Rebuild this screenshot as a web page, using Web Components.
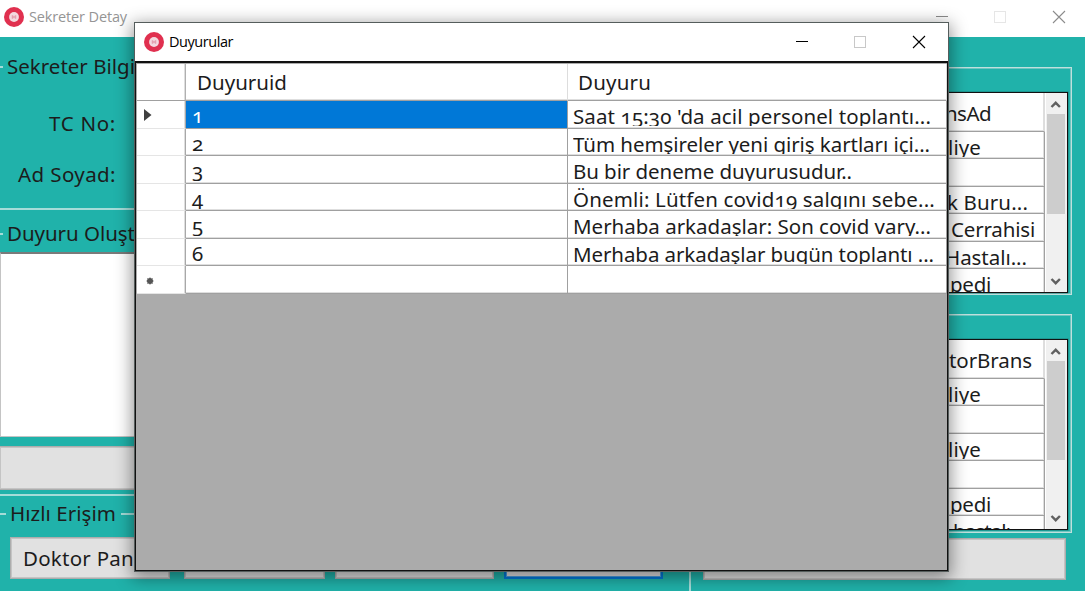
<!DOCTYPE html>
<html lang="tr"><head><meta charset="utf-8"><title>Sekreter Detay</title>
<style>html,body{margin:0;height:591px;overflow:hidden}body{width:1085px;position:relative;font:20.5px "Noto Sans","Open Sans",sans-serif;font-variant-numeric:oldstyle-nums;color:#1c1c1c}</style></head>
<body>
<secretary-page></secretary-page>
<script>
// Text run whose tracking is tuned to a given advance width.
class FitText extends HTMLElement{
  connectedCallback(){
    this.attachShadow({mode:'open'}).innerHTML='<style>:host{display:inline-block;white-space:pre;flex:none}span{display:inline-block}</style><span><slot></slot></span>';
    const w=+this.getAttribute('w');
    if(w){const s=this.shadowRoot.querySelector('span'),n=this.textContent.length;
      s.style.letterSpacing=((w-s.getBoundingClientRect().width)/n)+'px';}
  }
}
class AppIcon extends HTMLElement{
  connectedCallback(){this.attachShadow({mode:'open'}).innerHTML=`<style>:host{display:block;width:20px;height:20px;flex:none}svg{display:block}</style>
  <svg width="20" height="20" viewBox="0 0 20 20"><circle cx="10" cy="10" r="10" fill="#e0304f"/><circle cx="10" cy="10" r="4.9" fill="#f3d9df"/><path d="M8.500 8.200v3.600M11.500 8.200v3.600M8.500 10h3" stroke="#e3a0ae" stroke-width="1.500" fill="none"/></svg>`;}
}
class TitleBar extends HTMLElement{
  connectedCallback(){
    const off=this.hasAttribute('inactive'),c=off?'#8c8c8c':'#000',b=off?'#e6e6e6':'#c8c8c8';
    this.attachShadow({mode:'open'}).innerHTML=`<style>:host{display:flex;box-sizing:border-box;align-items:center;background:#fff;color:${off?'#959595':'#000'};font:14.5px "Open Sans","Noto Sans",sans-serif}
    fit-text{margin-left:5px;flex:1;line-height:20px}svg{display:block;flex:none}</style>
    <app-icon></app-icon><fit-text w="${this.getAttribute('w')}">${this.getAttribute('label')}</fit-text>
    <svg width="130" height="14" viewBox="0 0 130 14" fill="none"><path d="M0 6.5h12" stroke="${c}"/><rect x="58.5" y="1.5" width="11" height="11" stroke="${b}"/><path d="M117 1l12 12M129 1l-12 12" stroke="${c}" stroke-width="1.1"/></svg>`;}
}
class GroupBox extends HTMLElement{
  connectedCallback(){this.attachShadow({mode:'open'}).innerHTML=`<style>:host{display:block;box-sizing:border-box;border:1px solid #bfe0dd;box-shadow:inset 0 0 0 1px #6ec6c0}</style><slot></slot>`;}
}
class LegendLine extends HTMLElement{
  connectedCallback(){this.attachShadow({mode:'open'}).innerHTML=`<style>:host{display:flex;align-items:center;height:28px;line-height:26px}i{height:2px;background:#a5dcd8;width:var(--lead,3px);margin-right:4px;flex:none}b{height:2px;background:#a5dcd8;flex:1;margin-left:5px}::slotted(fit-text){height:28px}</style><i></i><slot></slot><b></b>`;}
}
class PushButton extends HTMLElement{
  connectedCallback(){this.attachShadow({mode:'open'}).innerHTML=`<style>:host{display:block;box-sizing:border-box;background:#e1e1e1;border:1px solid #adadad;box-shadow:inset 0 0 0 1px #c4c4c4;height:42px;line-height:41px;white-space:nowrap;overflow:hidden;flex:none}:host([active]){border:2px solid #0078d7;box-shadow:inset 0 0 0 1px #4c9de0}</style><slot></slot>`;}
}
class ScrollBar extends HTMLElement{
  connectedCallback(){this.attachShadow({mode:'open'}).innerHTML=`<style>:host{display:flex;flex-direction:column;width:21px;background:#f0f0f0;flex:none}svg{display:block;flex:none}i{display:block;height:${this.getAttribute('thumb')}px;width:18px;margin-left:1px;background:#cdcdcd;flex:none}b{flex:1}</style>
  <svg width="20" height="21"><path d="M5.500 14l4.200-4.200 4.200 4.200" stroke="#606060" stroke-width="2.400" fill="none"/></svg><i></i><b></b>
  <svg width="20" height="20"><path d="M5.500 7l4.200 4.200L13.900 7" stroke="#606060" stroke-width="2.400" fill="none"/></svg>`;}
}
// Table pane partly covered by the dialog; each row is text|end inset|width.
class SideTable extends HTMLElement{
  connectedCallback(){
    const rows=this.getAttribute('rows').split(';').map(r=>r.split('|'));
    this.attachShadow({mode:'open'}).innerHTML=`<style>:host{display:flex;box-sizing:border-box;border:1px solid #111;background:#fff;box-shadow:0 0 0 .5px #1115;overflow:hidden}
    .t{flex:1;display:grid;grid-template-rows:39px repeat(6,27.45px);overflow:hidden}
    .r{box-sizing:border-box;border-bottom:1px solid #a0a0a0;border-right:1px solid #a0a0a0;box-shadow:inset 0 -1px #dedede,inset -1px 0 #dedede;margin-right:1px;display:flex;justify-content:flex-end;line-height:30px;overflow:hidden}
    .r:first-child{line-height:40px;border-right-color:#ddd;border-bottom-color:#a0a0a0}
    .c{height:25px;overflow:hidden}.r:first-child .c{height:36px}</style>
    <div class="t">${rows.map(([t,e,w])=>`<div class="r"><div class="c" style="margin-right:${e||0}px">${t?`<fit-text w="${w}">${t}</fit-text>`:''}</div></div>`).join('')}</div>
    <scroll-bar thumb="${this.getAttribute('thumb')}"></scroll-bar>`;
  }
}
class NoticeGrid extends HTMLElement{
  connectedCallback(){
    const data=[['1','Saat 15:30 \'da acil personel toplantı...',358],['2','Tüm hemşireler yeni giriş kartları içi...',357],['3','Bu bir deneme duyurusudur..',279],['4','Önemli: Lütfen covid19 salgını sebe...',362],['5','Merhaba arkadaşlar: Son covid vary...',358],['6','Merhaba arkadaşlar bugün toplantı ...',361],['','',0]];
    const marks={0:'<svg width="8" height="12"><path d="M0 0l7.500 6-7.500 6z" fill="#404040"/></svg>',6:'<svg width="8" height="8" style="margin:2px 0 0 2px"><circle cx="4" cy="4" r="3" fill="#555"/><path d="M4 .5v7M.5 4h7M1.500 1.500l5 5M6.500 1.500l-5 5" stroke="#555"/></svg>'};
    this.attachShadow({mode:'open'}).innerHTML=`<style>:host{display:block;box-sizing:border-box;background:#ababab;overflow:hidden;padding:1px 0 0 1px}
    .row{display:grid;grid-template-columns:49px 382px 1fr;height:27.5px}.head{height:37px}
    .row>div{box-sizing:border-box;background:#fff;border-right:1px solid #a0a0a0;border-bottom:1px solid #a0a0a0;box-shadow:inset 0 -1px #dedede;overflow:hidden;padding-left:5px;line-height:30px}
    .row>.m{display:flex;align-items:center;padding:2px 0 0 7px;border-bottom-color:#e5e5e5;border-right-color:#a8a8a8;box-shadow:inset -1px 0 #dedede}
    .row.head>div{line-height:36px;padding-left:11px;border-bottom-color:#a0a0a0;border-right-color:#ddd}.row.head>div+div+div{padding-left:10px}.row.head>.m{border-right-color:#b0b0b0}
    .row>.sel{background:#0078d7;color:#fff;box-shadow:none}.c{height:25px;overflow:hidden}.n{padding-left:1px;line-height:28px}</style>
    <div class="row head"><div class="m"></div><div><fit-text w="90">Duyuruid</fit-text></div><div><fit-text w="73">Duyuru</fit-text></div></div>
    ${data.map(([a,b,w],i)=>`<div class="row"><div class="m">${marks[i]||''}</div><div class="${i?'':'sel'}"><div class="c n">${a}</div></div><div><div class="c">${b?`<fit-text w="${w}">${b}</fit-text>`:''}</div></div></div>`).join('')}`;
  }
}
class NoticeDialog extends HTMLElement{
  connectedCallback(){this.attachShadow({mode:'open'}).innerHTML=`<style>:host{display:flex;flex-direction:column;box-sizing:border-box;border:1px solid #555d5c;background:#fff;box-shadow:0 4px 16px 2px rgba(0,0,0,.42)}
  title-bar{height:38px;padding:0 22px 1px 9px;flex:none}notice-grid{flex:1;border:1px solid #111;border-top-width:2px}</style>
  <title-bar label="Duyurular" w="64"></title-bar><notice-grid></notice-grid>`;}
}
class SecretaryPage extends HTMLElement{
  connectedCallback(){this.attachShadow({mode:'open'}).innerHTML=`<style>
  :host{display:flex;flex-direction:column;width:1085px;height:591px;background:#20b2aa;overflow:hidden}
  .main{height:37px;padding:0 19px 3px 4px;flex:none}
  .body{display:grid;grid-template-columns:691px 1fr;height:554px}
  .left{display:flex;flex-direction:column;overflow:hidden}
  .info{height:173px;box-sizing:border-box;border-bottom:2px solid #a5dcd8;padding-top:16px}
  .f{width:116px;text-align:right;line-height:28px;margin-top:28px}.f+.f{margin-top:23px}
  .make{height:286px;box-sizing:border-box;border-bottom:2px solid #a5dcd8;padding-top:10px}
  .area{height:185px;box-sizing:border-box;background:#fff;border:solid #c4c4c4;border-width:2px 1px 1px;border-top-color:#7a7a7a;margin-top:4px}
  .make push-button{margin-top:9px;height:44px;border-left:0}
  .quick{flex:1;border-right:2px solid #a5dcd8;padding-top:4px;--lead:6px}
  .btns{display:flex;gap:10px;padding:9px 0 0 10px}
  .right{display:flex;flex-direction:column;padding-top:30px}
  group-box{box-sizing:border-box;width:370px;margin-left:11px;padding:24px 2px 0 10px}
  .right push-button{width:363px;margin:4px 0 0 12px}
  notice-dialog{position:absolute;left:134px;top:22px;width:815px;height:550px}</style>
  <title-bar class="main" inactive label="Sekreter Detay" w="98"></title-bar>
  <div class="body"><div class="left">
   <div class="info"><legend-line><fit-text w="128">Sekreter Bilgi</fit-text></legend-line><div class="f"><fit-text w="67">TC No:</fit-text></div><div class="f"><fit-text w="98">Ad Soyad:</fit-text></div></div>
   <div class="make"><legend-line><fit-text w="128">Duyuru Oluşt</fit-text></legend-line><div class="area"></div><push-button></push-button></div>
   <div class="quick"><legend-line><fit-text w="106">Hızlı Erişim</fit-text></legend-line>
    <div class="btns"><push-button style="width:160px;padding-left:12px"><fit-text w="111">Doktor Pan</fit-text></push-button><push-button style="width:141px;margin-left:4px"></push-button><push-button style="width:159px"></push-button><push-button active style="width:159px"></push-button></div></div>
  </div><div class="right">
   <group-box style="height:228px"><side-table style="height:201px;width:355px" thumb="100" rows="nsAd|53|46;liye|63|33;;k Buru...|16|81;Cerrahisi|9|84;Hastalı...|17|82;pedi|53|41"></side-table></group-box>
   <group-box style="height:219px;margin-top:19px"><side-table style="height:191px;width:355px" thumb="99" rows="torBrans|12|83;liye|63|33;;liye|63|33;;pedi|53|41;hastalı|34|57"></side-table></group-box>
   <push-button style="margin-top:5px"></push-button>
  </div></div>
  <notice-dialog></notice-dialog>`;}
}
customElements.define('fit-text',FitText);customElements.define('app-icon',AppIcon);customElements.define('title-bar',TitleBar);customElements.define('group-box',GroupBox);customElements.define('legend-line',LegendLine);customElements.define('push-button',PushButton);customElements.define('scroll-bar',ScrollBar);customElements.define('side-table',SideTable);customElements.define('notice-grid',NoticeGrid);customElements.define('notice-dialog',NoticeDialog);customElements.define('secretary-page',SecretaryPage);
</script></body></html>
